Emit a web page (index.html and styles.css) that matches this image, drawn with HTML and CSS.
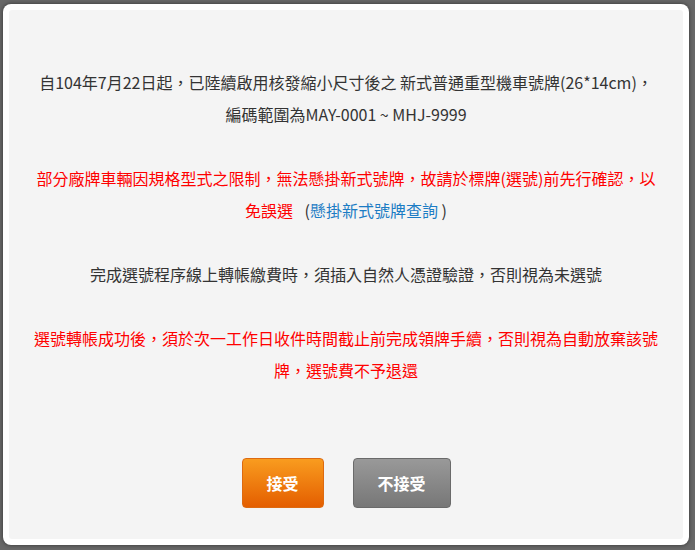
FILE: index.html
```html
<!DOCTYPE html>
<html lang="zh-Hant">

<head>
    <meta charset="UTF-8">
    <meta name="viewport" content="width=device-width, initial-scale=1.0">
    <title>選號須知</title>
    <link rel="stylesheet" href="styles.css">
</head>

<body>
    <div class="dialog">
        <div class="dialog_body">
            <p>自104年7月22日起，已陸續啟用核發縮小尺寸後之 新式普通重型機車號牌(26*14cm)，<br>編碼範圍為MAY-0001 ~ MHJ-9999</p>
            <p class="warn">部分廠牌車輛因規格型式之限制，無法懸掛新式號牌，故請於標牌(選號)前先行確認，以免誤選 <span class="paren open">(</span><a href="#">懸掛新式號牌查詢</a><span class="paren"> )</span></p>
            <p>完成選號程序線上轉帳繳費時，須插入自然人憑證驗證，否則視為未選號</p>
            <p class="warn">選號轉帳成功後，須於次一工作日收件時間截止前完成領牌手續，否則視為自動放棄該號牌，選號費不予退還</p>
            <div class="btns">
                <button class="btn accept">接受</button>
                <button class="btn reject">不接受</button>
            </div>
        </div>
    </div>
</body>

</html>
```

FILE: styles.css
```css
html,
body {
    margin: 0;
    height: 100%;
}

body {
    background: #686868;
    padding: 4px 6px 5px 3px;
    box-sizing: border-box;
    font-family: "Noto Sans CJK TC", "Noto Sans", sans-serif;
    font-size: 16px;
    color: #333;
}

.dialog {
    height: 100%;
    box-sizing: border-box;
    background: #fff;
    border-radius: 8px;
    padding: 6px;
    box-shadow: 0 0 4px rgba(0, 0, 0, 0.5);
}

.dialog_body {
    height: 100%;
    box-sizing: border-box;
    background: #f4f4f4;
    border-radius: 3px;
    padding: 56px 24px 0;
    text-align: center;
}

p {
    margin: 0 0 32px;
    line-height: 32px;
}

.warn {
    color: #ff0000;
}

.paren {
    color: #333;
}

.open {
    margin-left: 8px;
}

.warn a {
    color: #1c7cc4;
    text-decoration: none;
}

.btns {
    display: flex;
    justify-content: center;
    gap: 29px;
    margin-top: 72px;
}

.btn {
    height: 50px;
    border-radius: 4px;
    font-family: inherit;
    font-size: 16px;
    font-weight: bold;
    color: #fff;
    cursor: pointer;
}

.accept {
    width: 82px;
    background: linear-gradient(#f99c1f, #e45e00);
    border: 1px solid #dd6a10;
}

.reject {
    width: 98px;
    background: linear-gradient(#999, #777);
    border: 1px solid #6a6a6a;
}
```
